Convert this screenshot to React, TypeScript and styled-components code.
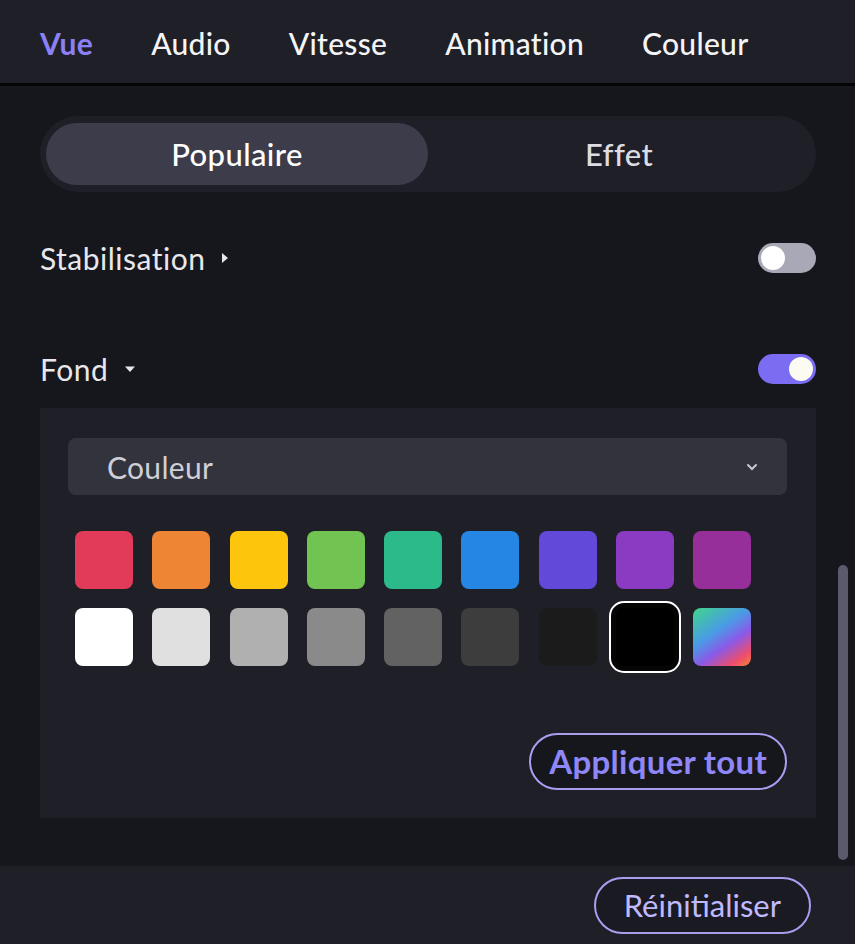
import * as React from "react";
import styled, { createGlobalStyle } from "styled-components";

const GlobalStyle = createGlobalStyle`
  html, body {
    margin: 0;
    padding: 0;
    background: #16161d;
  }
  * { box-sizing: border-box; }
`;

const tabs = ["Vue", "Audio", "Vitesse", "Animation", "Couleur"];

const colors = [
  "#e23b5a", "#ee8535", "#fdc60d", "#72c452", "#2dba8b", "#2686e4", "#6249d9", "#8a3bc1", "#962f99",
  "#ffffff", "#e0e0e0", "#b0b0b0", "#8a8a8a", "#626262", "#3d3d3d", "#1b1b1b", "#000000",
  "linear-gradient(145deg, #3fd68a 0%, #4a9be6 40%, #8a5ae8 62%, #ef4d6a 85%, #f7843a 100%)",
];

const App = () => {
  return (
    <Page>
      <GlobalStyle />
      <Tabs>
        {tabs.map((t, i) => (
          <Tab key={t} $active={i === 0}>{t}</Tab>
        ))}
      </Tabs>
      <Body>
        <Segment>
          <SegItem $active>Populaire</SegItem>
          <SegItem>Effet</SegItem>
        </Segment>

        <Row $top={40}>
          <Label>
            Stabilisation
            <svg width="8" height="12" viewBox="0 0 8 12">
              <path d="M1 1 L7 6 L1 11 Z" fill="#e6e6ea" />
            </svg>
          </Label>
          <Toggle $on={false}><Knob $on={false} /></Toggle>
        </Row>

        <Row $top={59}>
          <Label>
            Fond
            <svg width="12" height="8" viewBox="0 0 12 8">
              <path d="M1 1.5 L11 1.5 L6 7 Z" fill="#e6e6ea" />
            </svg>
          </Label>
          <Toggle $on><Knob $on /></Toggle>
        </Row>

        <Panel>
          <Select>
            <span>Couleur</span>
            <svg width="14" height="10" viewBox="0 0 14 10">
              <path d="M3 3 L7 7 L11 3" stroke="#c8c8d0" strokeWidth="2" fill="none" strokeLinecap="round" />
            </svg>
          </Select>
          <Swatches>
            {colors.map((c, i) => (
              <Swatch key={i} style={{ background: c }} $selected={i === 16} />
            ))}
          </Swatches>
          <ApplyRow>
            <ApplyButton>Appliquer tout</ApplyButton>
          </ApplyRow>
        </Panel>
        <ScrollThumb />
      </Body>
      <Footer>
        <ResetButton>Réinitialiser</ResetButton>
      </Footer>
    </Page>
  );
};

const Page = styled.div`
  width: 855px;
  height: 944px;
  display: flex;
  flex-direction: column;
  background: #16161d;
  font-family: Lato, "Noto Sans", sans-serif;
  overflow: hidden;
`;

const Tabs = styled.div`
  height: 86px;
  flex-shrink: 0;
  display: flex;
  align-items: center;
  gap: 58px;
  padding: 0 0 0 40px;
  background: #1f1f27;
  border-bottom: 3px solid #050507;
`;

const Tab = styled.div<{ $active?: boolean }>`
  color: ${(p) => (p.$active ? "#8b80f7" : "#f4f4f6")};
  font: ${(p) => (p.$active ? 700 : 500)} 30px/1 Lato, "Noto Sans", sans-serif;
  letter-spacing: 0.3px;
  margin-top: 2px;
`;

const Body = styled.div`
  position: relative;
  flex: 1;
  padding: 30px 39px 0 40px;
  background: #16161d;
`;

const Segment = styled.div`
  display: flex;
  height: 76px;
  padding: 7px 6px;
  border-radius: 38px;
  background: #1f1f28;
`;

const SegItem = styled.div<{ $active?: boolean }>`
  flex: 1;
  display: flex;
  align-items: center;
  justify-content: center;
  border-radius: 32px;
  background: ${(p) => (p.$active ? "#3d3c4b" : "transparent")};
  color: ${(p) => (p.$active ? "#ffffff" : "#dcdce2")};
  font: 500 31px/1 Lato, "Noto Sans", sans-serif;
  letter-spacing: 0.4px;
`;

const Row = styled.div<{ $top: number }>`
  display: flex;
  align-items: center;
  justify-content: space-between;
  height: 52px;
  margin-top: ${(p) => p.$top}px;
`;

const Label = styled.div`
  display: flex;
  align-items: center;
  gap: 16px;
  color: #e8e8ec;
  font: 400 30px/1 Lato, "Noto Sans", sans-serif;
  letter-spacing: 0.5px;
`;

const Toggle = styled.div<{ $on: boolean }>`
  width: 58px;
  height: 30px;
  border-radius: 15px;
  padding: 3px;
  display: flex;
  justify-content: ${(p) => (p.$on ? "flex-end" : "flex-start")};
  background: ${(p) => (p.$on ? "#7b6cf2" : "#a9a8b7")};
`;

const Knob = styled.div<{ $on: boolean }>`
  width: 24px;
  height: 24px;
  border-radius: 50%;
  background: ${(p) => (p.$on ? "#fbfbf2" : "#ffffff")};
`;

const Panel = styled.div`
  margin-top: 13px;
  height: 410px;
  padding: 30px 29px 28px 28px;
  background: #1f1f27;
  display: flex;
  flex-direction: column;
`;

const Select = styled.div`
  height: 57px;
  border-radius: 8px;
  background: #33333e;
  display: flex;
  align-items: center;
  justify-content: space-between;
  padding: 0 28px 0 39px;
  color: #cfcfd6;
  font: 400 30px/1 Lato, "Noto Sans", sans-serif;
  letter-spacing: 0.3px;
`;

const Swatches = styled.div`
  display: grid;
  grid-template-columns: repeat(9, 58px);
  grid-auto-rows: 58px;
  column-gap: 19.3px;
  row-gap: 19px;
  margin: 36px 0 0 7px;
`;

const Swatch = styled.div<{ $selected?: boolean }>`
  border-radius: 8px;
  ${(p) =>
    p.$selected &&
    `
    box-shadow: 0 0 0 5px #050505;
    outline: 2px solid #ffffff;
    outline-offset: 5px;
  `}
`;

const ApplyRow = styled.div`
  display: flex;
  justify-content: flex-end;
  margin-top: 67px;
`;

const ApplyButton = styled.button`
  height: 57px;
  padding: 0 18px;
  border-radius: 29px;
  border: 2px solid #a69ff0;
  background: #16161d;
  color: #8f86f7;
  font: 700 33px/1 Lato, "Noto Sans", sans-serif;
  letter-spacing: 0.3px;
`;

const ScrollThumb = styled.div`
  position: absolute;
  right: 7px;
  top: 479px;
  width: 10px;
  height: 295px;
  border-radius: 5px;
  background: #5b596c;
`;

const Footer = styled.div`
  height: 78px;
  flex-shrink: 0;
  display: flex;
  align-items: center;
  justify-content: flex-end;
  padding: 0 44px 0 0;
  background: #1f1f27;
`;

const ResetButton = styled.button`
  height: 57px;
  padding: 0 28px;
  border-radius: 29px;
  border: 2px solid #a69ff0;
  background: #1a1a22;
  color: #c0b9ff;
  font: 400 31px/1 Lato, "Noto Sans", sans-serif;
`;

export default App;
